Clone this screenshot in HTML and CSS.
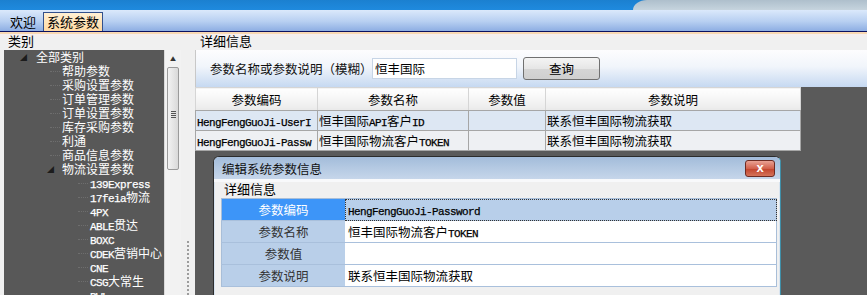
FILE: index.html
```html
<!DOCTYPE html>
<html lang="zh-CN">
<head>
    <meta charset="UTF-8">
    <title>系统参数</title>
    <link rel="stylesheet" href="styles.css">
</head>
<body>
    <div class="topbar"><div class="topbar-right"></div></div>
    <div class="tabbar">
        <span class="tab">欢迎</span>
        <span class="tab active">系统参数</span>
    </div>
    <div class="tabline"></div>

    <div class="main">
        <div class="side">
            <div class="caption">类别</div>
            <div class="side-body">
                <ul class="tree">
                    <li class="lv0"><span class="exp">◢</span>全部类别</li>
                    <li class="lv1">帮助参数</li>
                    <li class="lv1">采购设置参数</li>
                    <li class="lv1">订单管理参数</li>
                    <li class="lv1">订单设置参数</li>
                    <li class="lv1">库存采购参数</li>
                    <li class="lv1">利通</li>
                    <li class="lv1">商品信息参数</li>
                    <li class="lv1 open"><span class="exp">◢</span>物流设置参数</li>
                    <li class="lv2"><span class="mono">139Express</span></li>
                    <li class="lv2"><span class="mono">17feia</span>物流</li>
                    <li class="lv2"><span class="mono">4PX</span></li>
                    <li class="lv2"><span class="mono">ABLE</span>贯达</li>
                    <li class="lv2"><span class="mono">BOXC</span></li>
                    <li class="lv2"><span class="mono">CDEK</span>营销中心</li>
                    <li class="lv2"><span class="mono">CNE</span></li>
                    <li class="lv2"><span class="mono">CSG</span>大常生</li>
                    <li class="lv2"><span class="mono">DWL</span></li>
                </ul>
                <div class="vscroll">
                    <div class="arrow">▲</div>
                    <div class="thumb"><span class="grip"></span></div>
                </div>
                <div class="splitter"></div>
            </div>
        </div>

        <div class="content">
            <div class="caption">详细信息</div>
            <div class="search">
                <label class="search-label">参数名称或参数说明（模糊）</label>
                <input class="search-input" type="text" value="恒丰国际">
                <button class="search-btn" type="button">查询</button>
            </div>
            <div class="grid-area">
                <table class="grid">
                    <thead>
                        <tr>
                            <th class="c1">参数编码</th>
                            <th class="c2">参数名称</th>
                            <th class="c3">参数值</th>
                            <th class="c4">参数说明</th>
                        </tr>
                    </thead>
                    <tbody>
                        <tr class="alt">
                            <td><span class="mono">HengFengGuoJi-UserI</span></td>
                            <td>恒丰国际<span class="mono">API</span>客户<span class="mono">ID</span></td>
                            <td></td>
                            <td>联系恒丰国际物流获取</td>
                        </tr>
                        <tr>
                            <td><span class="mono">HengFengGuoJi-Passw</span></td>
                            <td>恒丰国际物流客户<span class="mono">TOKEN</span></td>
                            <td></td>
                            <td>联系恒丰国际物流获取</td>
                        </tr>
                    </tbody>
                </table>
            </div>
        </div>
    </div>

    <!-- modal edit dialog -->
    <div class="dialog">
        <div class="dialog-title">
            <span>编辑系统参数信息</span>
            <span class="close">x</span>
        </div>
        <div class="dialog-body">
            <div class="group-caption">详细信息</div>
            <table class="props">
                <tr class="selected">
                    <th>参数编码</th>
                    <td><span class="mono">HengFengGuoJi-Password</span></td>
                </tr>
                <tr>
                    <th>参数名称</th>
                    <td>恒丰国际物流客户<span class="mono">TOKEN</span></td>
                </tr>
                <tr>
                    <th>参数值</th>
                    <td></td>
                </tr>
                <tr>
                    <th>参数说明</th>
                    <td>联系恒丰国际物流获取</td>
                </tr>
            </table>
        </div>
    </div>
</body>
</html>
```

FILE: styles.css
```css
body {
    margin: 0;
    width: 867px;
    height: 295px;
    overflow: hidden;
    position: relative;
    background-color: #f0f0f0;
    font-family: "Noto Sans CJK SC", "Liberation Sans", sans-serif;
    font-size: 12px;
    color: #000;
}
.mono {
    font-family: "Liberation Mono", "Noto Sans CJK SC", monospace;
    font-size: 11px;
    letter-spacing: -0.6px;
    font-weight: normal;
    -webkit-text-stroke: 0.25px currentColor;
}

/* header + tabs */
.topbar {
    height: 10px;
    background: linear-gradient(to bottom, #1b80d0, #1f8ade);
    position: relative;
}
.topbar-right {
    position: absolute;
    right: 0;
    top: 0;
    width: 234px;
    height: 10px;
    background: linear-gradient(to bottom, #aebfcc, #c6d4de);
    border-top-left-radius: 14px 10px;
}
.tabbar {
    height: 21px;
    background: linear-gradient(to bottom, #dbe9fb, #b7cff1 55%, #8daee3);
    display: flex;
    align-items: flex-end;
    padding-left: 8px;
    gap: 3px;
}
.tab {
    line-height: 18px;
    padding: 0 4px 0 2px;
    font-size: 13px;
}
.tab.active {
    background: linear-gradient(to bottom, #fff0d4, #ffd9a2);
    border: 1px solid #32508c;
    border-bottom: none;
    padding: 0 3px;
    line-height: 18px;
}
.tabline {
    height: 1px;
    background-color: #0a1060;
    border-bottom: 2px solid #f9d9b3;
}

.main {
    display: flex;
    height: 261px;
}
.caption {
    height: 16px;
    line-height: 14px;
    padding-left: 8px;
    font-size: 13px;
    background: linear-gradient(to bottom, #f7eeee, #f0f0f0 4px);
}

/* left category tree */
.side {
    width: 195px;
    flex-shrink: 0;
}
.side-body {
    display: flex;
    height: 245px;
    padding-left: 4px;
}
.tree {
    width: 160px;
    margin: 0;
    padding: 0;
    list-style: none;
    background-color: #585858;
    color: #fff;
}
.tree li {
    height: 14px;
    line-height: 14px;
    white-space: nowrap;
    position: relative;
}
.tree .lv0 { padding-left: 32px; }
.tree .lv1 { padding-left: 58px; }
.tree .lv2 { padding-left: 86px; }
.tree .lv1::before,
.tree .lv2::before {
    content: "";
    position: absolute;
    top: 7px;
    width: 10px;
    border-top: 1px dotted #6e6e6e;
}
.tree .lv1::before { left: 46px; }
.tree .lv2::before { left: 74px; }
.exp {
    position: absolute;
    font-size: 7px;
    color: #1c1c1c;
    top: 0;
}
.lv0 .exp { left: 16px; }
.lv1 .exp { left: 43px; }
.lv1.open::before { display: none; }

.vscroll {
    width: 16px;
    background-color: #f2f2f2;
    border-left: 1px solid #dadada;
    position: relative;
}
.arrow {
    font-size: 6px;
    color: #333;
    text-align: center;
    height: 17px;
    line-height: 17px;
}
.thumb {
    margin: 0 2px 0 2px;
    height: 101px;
    border: 1px solid #9a9a9a;
    border-radius: 2px;
    background: linear-gradient(to right, #f2f2f2, #d9d9d9);
    position: relative;
}
.grip {
    position: absolute;
    left: 3px;
    top: 43px;
    width: 5px;
    height: 7px;
    background: repeating-linear-gradient(to bottom, #555 0, #555 1px, transparent 1px, transparent 2px);
}
.splitter {
    width: 4px;
    margin-left: 5px;
    margin-top: 190px;
    background: radial-gradient(circle, #9c9c9c 0.8px, transparent 1.2px) 0 0 / 4px 4px;
}

/* right detail panel */
.content {
    flex: 1;
    display: flex;
    flex-direction: column;
}
.content .caption {
    padding-left: 5px;
}
.search {
    height: 37px;
    display: flex;
    align-items: center;
    padding-left: 14px;
    border-left: 1px solid #c8c8c8;
    background: linear-gradient(to bottom, #fdfdfe, #f1f5fb 45%, #c6d9f1);
}
.search-label {
    width: 162px;
    font-size: 12.5px;
    color: #111;
}
.search-input {
    width: 139px;
    height: 17px;
    border: 1px solid #c7d5e6;
    padding: 1px 2px;
    margin: 0;
    font-family: "Noto Sans CJK SC", sans-serif;
    font-size: 12.5px;
    background-color: #fff;
}
.search-btn {
    margin-left: 6px;
    width: 77px;
    height: 23px;
    border: 1px solid #707070;
    border-radius: 3px;
    background: linear-gradient(to bottom, #f4f4f4, #e6e6e6 50%, #d6d6d6 51%, #cfcfcf);
    font-family: "Noto Sans CJK SC", sans-serif;
    font-size: 12.5px;
    padding: 0;
}
.grid-area {
    flex: 1;
    background-color: #5a5a5a;
}
.grid {
    border-collapse: collapse;
    width: 603px;
    table-layout: fixed;
    background-color: #fff;
}
.grid th,
.grid td {
    border: 1px solid #a6a6a6;
    padding: 0 1px;
    white-space: nowrap;
    overflow: hidden;
    text-align: left;
}
.grid th {
    height: 22px;
    font-weight: normal;
    text-align: center;
    font-size: 12.5px;
    background: linear-gradient(to bottom, #ffffff, #f3f3f3 60%, #e9e9e9);
    border-color: #d5d5d5;
    border-bottom-color: #a6a6a6;
}
.grid td {
    height: 19px;
    background-color: #eef0f3;
    font-size: 12.5px;
}
.grid .alt td {
    background-color: #dde7f3;
}
.grid .c1 { width: 119px; }
.grid .c2 { width: 148px; }
.grid .c3 { width: 74px; }
.grid .c4 { width: 252px; }

/* dialog over the grid */
.dialog {
    position: absolute;
    left: 213px;
    top: 156px;
    width: 566px;
    height: 150px;
    border: 1px solid #2c2c2c;
    border-right-color: #3f8fa8;
    border-radius: 6px 6px 0 0;
    background-color: #f0f0f0;
    box-shadow: inset 0 0 0 1px #d8e4f0;
    overflow: hidden;
}
.dialog-title {
    height: 22px;
    display: flex;
    align-items: center;
    justify-content: space-between;
    padding: 0 5px 0 8px;
    background: linear-gradient(to bottom, #a3bcda, #b8cce4 60%, #c6d6ea);
    font-size: 12.5px;
    color: #111;
}
.close {
    width: 28px;
    height: 15px;
    border: 1px solid #6e2b22;
    border-radius: 3px;
    background: linear-gradient(to bottom, #e9a294, #d2614c 50%, #c2432c 51%, #d4735a);
    color: #fff;
    font-family: "Liberation Sans", sans-serif;
    font-weight: bold;
    font-size: 13px;
    line-height: 13px;
    text-align: center;
}
.dialog-body {
    padding: 0 4px 0 7px;
    border-top: 3px solid #f8f9fb;
}
.group-caption {
    height: 16px;
    line-height: 14px;
    padding-left: 3px;
    font-size: 13px;
}
.props {
    width: 556px;
    border-collapse: collapse;
    table-layout: fixed;
    background-color: #fff;
    border: 1px solid #a8bed8;
}
.props th,
.props td {
    height: 21px;
    border-bottom: 1px solid #a9c0dc;
    padding: 0;
    font-size: 12.5px;
    white-space: nowrap;
}
.props th {
    width: 123px;
    background-color: #b9cfe9;
    font-weight: normal;
    color: #333;
    text-align: center;
}
.props td {
    padding-left: 3px;
    background-color: #fff;
}
.props .selected th {
    background-color: #3d95f8;
    color: #fff;
}
.props .selected td {
    background-color: #b8cfea;
    outline: 1px dotted #333;
    outline-offset: -1px;
}
```
